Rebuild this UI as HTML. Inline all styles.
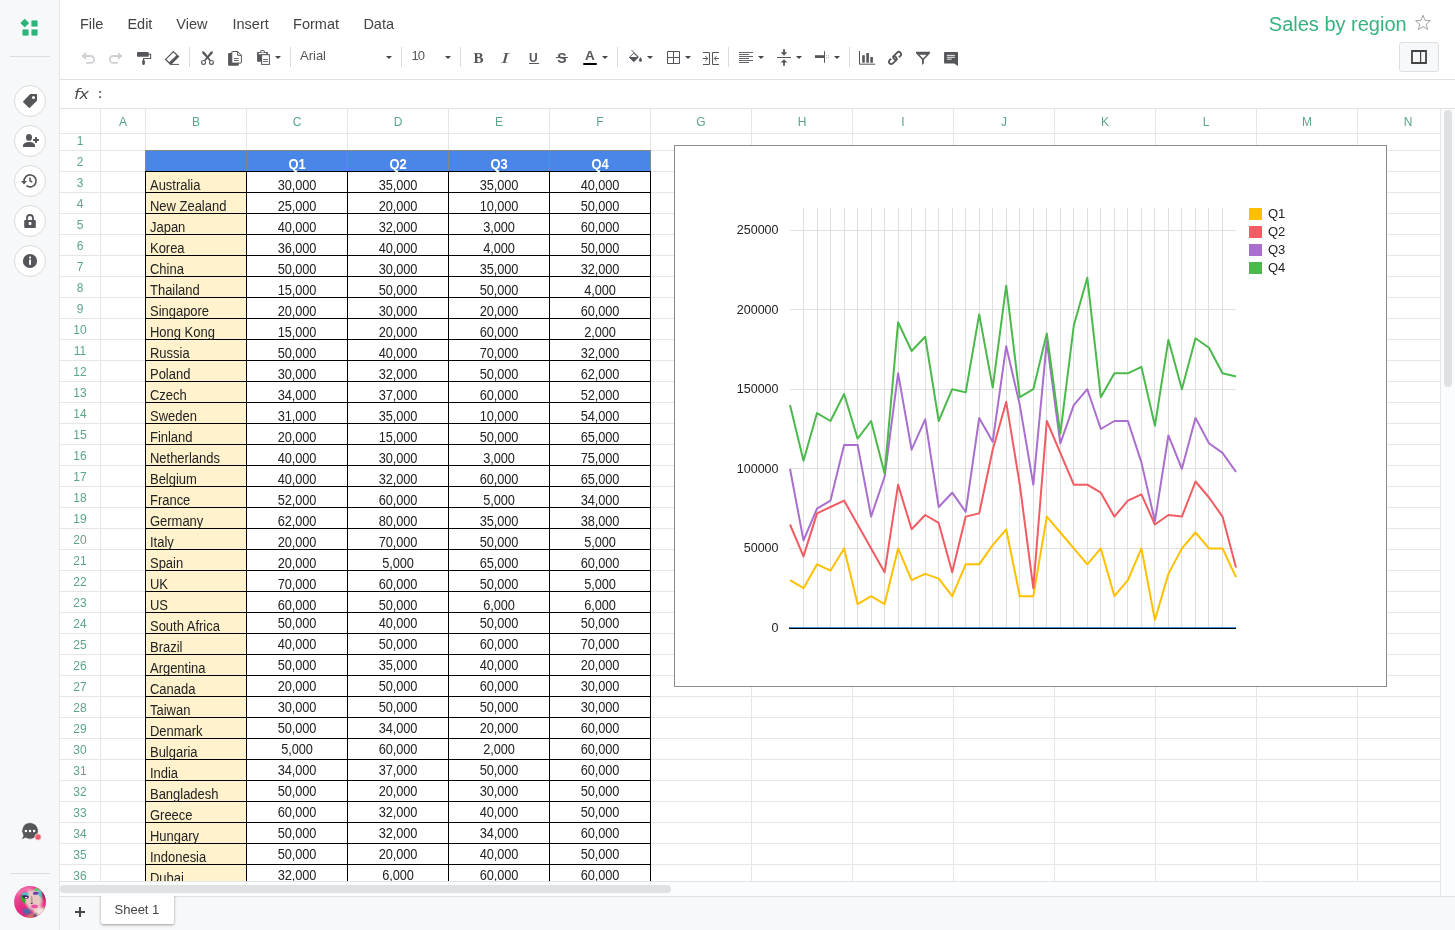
<!DOCTYPE html>
<html lang="en"><head><meta charset="utf-8"><title>Sales by region</title>
<style>
html,body{margin:0;padding:0;}
body{width:1455px;height:930px;overflow:hidden;background:#fff;position:relative;
 font-family:"Liberation Sans",Arial,sans-serif;font-size:13px;color:#222;}
.abs,.abs>*{position:absolute;}
div,svg,span{position:absolute;box-sizing:border-box;}
body>div{will-change:transform;}
#side{left:0;top:0;width:60px;height:930px;background:#f7f8fa;border-right:1px solid #e3e4e6;}
.circ{left:14px;width:32px;height:32px;border-radius:50%;background:#fff;border:1px solid #dcdcdc;}
.hr{left:10px;width:40px;height:1px;background:#dcdddf;}
.menu{top:14px;height:20px;line-height:20px;font-size:14.5px;color:#444;white-space:nowrap;}
.sep{width:1px;top:47px;height:20px;background:#dcdcdc;}
.dd{width:0;height:0;border-left:3.2px solid transparent;border-right:3.2px solid transparent;border-top:3.2px solid #444;top:56px;}
.t{white-space:nowrap;line-height:15px;height:15px;}
.ch{top:115px;width:40px;text-align:center;color:#5ba687;font-size:12px;line-height:15px;height:15px;}
.rh{left:60px;width:40px;text-align:center;color:#5ba687;font-size:12px;line-height:15px;height:15px;}
.vl{top:109px;width:1px;height:772px;background:#e6e6e6;}
.hl{left:60px;height:1px;width:1380px;background:#e6e6e6;}
.nm{left:150px;color:#222;font-size:13.33px;letter-spacing:-0.02px;transform:scale(0.975,1.07);transform-origin:0 12px;}
.nu{width:100px;text-align:center;color:#222;font-size:13.33px;letter-spacing:-0.12px;transform:scale(0.96,1.07);transform-origin:50% 12px;}
.q{width:100px;text-align:center;color:#fff;font-weight:bold;font-size:13.33px;letter-spacing:-0.2px;transform:scale(0.97,1.07);transform-origin:50% 12px;}
.bv{width:1px;background:#000;}
.bh{height:1px;background:#000;left:145px;width:506px;}
</style></head>
<body>
<div id="side">
<svg style="left:16px;top:14px" width="28" height="26" viewBox="16 14 28 26"><g fill="#2db37a" stroke="#fff" stroke-width="0.8"><rect x="21.3" y="19.6" width="6.9" height="6.9" rx="1.1" transform="rotate(45 24.75 23.05)"/><rect x="31" y="20" width="7" height="7" rx="1"/><rect x="22" y="29" width="7" height="7" rx="1"/><rect x="31" y="29" width="7" height="7" rx="1"/></g></svg><div class="hr" style="top:56px"></div>
<div class="circ" style="top:85px"></div><svg style="left:18px;top:88px" width="24" height="24" viewBox="18 88 24 24"><path d="M30.4 94.1 H36.4 Q37 94.1 37 94.7 V100.4 Q37 100.8 36.7 101.1 L29.9 107.8 Q29.4 108.2 28.9 107.7 L23.2 102.2 Q22.8 101.7 23.3 101.2 L29.7 94.4 Q30 94.1 30.4 94.1 Z" fill="#55565a"/><circle cx="33.5" cy="97.5" r="1.5" fill="#fff"/></svg>
<div class="circ" style="top:125px"></div><svg style="left:18px;top:128px" width="24" height="24" viewBox="18 128 24 24"><g fill="#55565a"><ellipse cx="29" cy="137.4" rx="3" ry="3.35"/><path d="M23 147 V145.6 C23 143.2 26 142 29 142 S35 143.2 35 145.6 V147 Z"/><rect x="33.1" y="139" width="5.8" height="2"/><rect x="35" y="137.1" width="2" height="5.8"/></g></svg>
<div class="circ" style="top:165px"></div><svg style="left:18px;top:168px" width="24" height="24" viewBox="18 168 24 24"><path d="M24.1 181.6 A6 6 0 1 1 26.4 185.7" fill="none" stroke="#55565a" stroke-width="1.7"/><path d="M21 181.1 H27 L24 184.6 Z" fill="#55565a"/><path d="M30 177.4 V180.7 L32.2 182" fill="none" stroke="#55565a" stroke-width="1.5"/></svg>
<div class="circ" style="top:205px"></div><svg style="left:18px;top:208px" width="24" height="24" viewBox="18 208 24 24"><rect x="24.2" y="220.1" width="11.6" height="7.8" rx="1" fill="#55565a"/><path d="M27 220.5 V218 A3 3 0 0 1 33 218 V220.5" fill="none" stroke="#55565a" stroke-width="1.8"/><rect x="28.8" y="222.1" width="2.5" height="2.9" rx="0.4" fill="#fff"/></svg>
<div class="circ" style="top:245px"></div><svg style="left:18px;top:248px" width="24" height="24" viewBox="18 248 24 24"><circle cx="30" cy="261" r="7.1" fill="#55565a"/><rect x="29.1" y="256.6" width="1.9" height="1.9" fill="#fff"/><rect x="29.1" y="259.6" width="1.9" height="5.2" fill="#fff"/></svg>
<svg style="left:16px;top:818px" width="30" height="28" viewBox="16 818 30 28"><path d="M30 822.6 A8.3 8.3 0 1 1 25.6 837.9 Q23.4 839.4 20.6 839.2 Q22.8 837.8 23.1 835.4 A8.3 8.3 0 0 1 30 822.6 Z" fill="#55565a" stroke="#fff" stroke-width="0.8"/><rect x="24.8" y="829.9" width="2.2" height="2.2" fill="#fff"/><rect x="28.9" y="829.9" width="2.2" height="2.2" fill="#fff"/><rect x="33" y="829.9" width="2.2" height="2.2" fill="#fff"/><circle cx="38" cy="837" r="3.2" fill="#f15b6c" stroke="#f9f1f3" stroke-width="0.7"/></svg><div class="hr" style="top:873px"></div>
<svg style="left:13px;top:885px" width="34" height="34" viewBox="13 885 34 34"><defs><clipPath id="avc"><circle cx="30" cy="902" r="15.9"/></clipPath><filter id="avb" x="-20%" y="-20%" width="140%" height="140%"><feGaussianBlur stdDeviation="0.8"/></filter><filter id="avb2" x="-20%" y="-20%" width="140%" height="140%"><feGaussianBlur stdDeviation="0.68"/></filter><linearGradient id="avg" x1="0" y1="0" x2="1" y2="1"><stop offset="0" stop-color="#f06aa6"/><stop offset="0.45" stop-color="#e62a82"/><stop offset="1" stop-color="#e02377"/></linearGradient></defs><g clip-path="url(#avc)"><rect x="13" y="885" width="34" height="34" fill="url(#avg)"/><g filter="url(#avb)"><path d="M17 893 Q24 886.5 34 886.5 L30 889.5 Q22 890 18 897 Z" fill="#f47fb2"/><path d="M41 890 L44.5 893 L45.5 902 L42 906 L41 899 Z" fill="#8a1f5c"/><path d="M42.5 898 Q46.5 901 45 908 L41.5 905.5 Z" fill="#ea3a8c"/><path d="M28.1 890.2 L40.3 889.5 L42 900.1 L40.3 908.9 L34.1 911.6 L28.7 908 L24.9 902.6 L25.3 896 Z" fill="#e9c8c2"/><path d="M34 911 L41 907.5 L44.5 908 L44.8 912 L38 916.5 L33 914.5 Z" fill="#f1e6e0"/><path d="M23 909 L29.6 908.6 L31 913 L27 914.8 L23.5 913 Z" fill="#3d6dab"/><path d="M26.5 916.8 L37 912.6 L37.6 914.4 L28 918.3 Z" fill="#c9b048"/><path d="M33.6 913.6 L36.8 913 L37 916.6 L33.8 917.2 Z" fill="#34206a"/></g><g filter="url(#avb2)"><path d="M21.8 893.2 Q25 891.8 28.6 893.4 L28.4 895.6 L22.4 895.8 Z" fill="#43c8c6"/><path d="M20.4 895.6 L23 895.4 L25.4 900.2 L24.8 903.8 L21.6 900.4 Z" fill="#22b026"/><path d="M22.6 895.6 Q25.6 894.6 28.8 896 L28.2 898.4 Q25 899 22.8 897.6 Z" fill="#3c1a6a"/><ellipse cx="26.1" cy="897.4" rx="1.2" ry="0.7" fill="#d8d8f0"/><path d="M34.4 888.4 L38.2 888.2 L38.4 890.8 L34.8 891.2 Z" fill="#3fd862"/><path d="M38.2 890.4 L41 891 L41.2 897.2 L39 896 Z" fill="#38c9d2"/><path d="M33 892.6 Q35.6 891 38.6 892.2 L38.2 894.6 Q35.4 895.2 33.2 894.4 Z" fill="#6b3caa"/><path d="M30.8 896 L32.2 896 L32.9 902.6 L32.6 904.2 L30.7 904 L31 900 Z" fill="#9a726e" opacity="0.55"/><ellipse cx="31.7" cy="903.4" rx="1.0" ry="0.7" fill="#4a2c2e" opacity="0.8"/><ellipse cx="34.5" cy="906.4" rx="3.4" ry="1.8" fill="#e955a4"/><circle cx="44" cy="908.8" r="0.9" fill="#86da42"/></g></g></svg></div>
<div id="top" style="left:60px;top:0;width:1395px;height:80px;border-bottom:1px solid #e0e1e3;background:#fff">
<div class="menu" style="left:20.0px">File</div><div class="menu" style="left:67.4px">Edit</div><div class="menu" style="left:116.3px">View</div><div class="menu" style="left:172.5px">Insert</div><div class="menu" style="left:233.1px">Format</div><div class="menu" style="left:303.4px">Data</div>
<div id="title" style="left:1208.8px;top:11px;height:26px;line-height:26px;font-size:20px;color:#36b37e;white-space:nowrap">Sales by region</div>
<svg style="left:1353px;top:12px" width="20" height="20" viewBox="1413 12 20 20"><path d="M1423 15.2 L1425 20.4 L1430.4 20.7 L1426.2 24.2 L1427.6 29.5 L1423 26.5 L1418.4 29.5 L1419.8 24.2 L1415.6 20.7 L1421 20.4 Z" fill="none" stroke="#9a9a9a" stroke-width="0.9" stroke-linejoin="miter"/></svg><div style="left:1339px;top:42px;width:40px;height:30px;border:1px solid #dedfe1;border-radius:3px;background:#f7f8fa"></div><svg style="left:1349px;top:48px" width="20" height="18" viewBox="1409 48 20 18"><path d="M1412 51 H1426 V63 H1412 Z" fill="none" stroke="#444" stroke-width="1.8"/><path d="M1420.6 51 V63" fill="none" stroke="#444" stroke-width="1.2"/></svg>
<svg style="left:18px;top:48px" width="20" height="20" viewBox="78 48 20 20"><path d="M85.9 56 H90.7 A3.45 3.45 0 0 1 90.7 62.9 H86.1" fill="none" stroke="#cfd0d3" stroke-width="1.8"/><path d="M81.3 56 L86 52.1 V59.9 Z" fill="#cfd0d3"/></svg>
<svg style="left:46px;top:48px" width="20" height="20" viewBox="106 48 20 20"><g transform="translate(204 0) scale(-1 1)"><path d="M85.9 56 H90.7 A3.45 3.45 0 0 1 90.7 62.9 H86.1" fill="none" stroke="#cfd0d3" stroke-width="1.8"/><path d="M81.3 56 L86 52.1 V59.9 Z" fill="#cfd0d3"/></g></svg>
<svg style="left:74px;top:48px" width="20" height="20" viewBox="134 48 20 20"><rect x="137" y="52" width="11.8" height="4.7" rx="0.9" fill="#55565a"/><path d="M148.8 54.3 H150.6 V58.5 H143.5 V60.2" fill="none" stroke="#55565a" stroke-width="1.1"/><rect x="142.2" y="60" width="2.7" height="4.9" rx="1.1" fill="#55565a"/></svg>
<svg style="left:102px;top:48px" width="20" height="20" viewBox="162 48 20 20"><path d="M173.4 51.6 L178.5 56.6 L170.6 64.3 L165.6 59.4 Z" fill="none" stroke="#55565a" stroke-width="1.3" stroke-linejoin="miter"/><path d="M178.5 56.6 L170.6 64.3 L168.9 62.6 L176.8 54.9 Z" fill="#55565a"/><path d="M170.4 64.4 H179" stroke="#55565a" stroke-width="1" fill="none"/></svg>
<svg style="left:138px;top:48px" width="20" height="20" viewBox="198 48 20 20"><g fill="none" stroke="#55565a" stroke-width="1.1"><circle cx="203.55" cy="62.4" r="1.95"/><circle cx="211.45" cy="62.4" r="1.95"/></g><path d="M202.20 50.90 L202.50 53.60 L209.60 61.10 L210.80 60.10 L204.60 51.90 Z" fill="#55565a"/><path d="M212.80 50.90 L212.50 53.60 L205.40 61.10 L204.20 60.10 L210.40 51.90 Z" fill="#55565a"/></svg>
<svg style="left:166px;top:48px" width="20" height="20" viewBox="226 48 20 20"><rect x="228.1" y="53.1" width="10.7" height="12.7" rx="0.8" fill="#55565a"/><path d="M232.3 51.5 H237.6 L241.4 55.3 V62.6 Q241.4 63.1 240.9 63.1 H232.3 Q231.8 63.1 231.8 62.6 V52 Q231.8 51.5 232.3 51.5 Z" fill="#fff" stroke="#55565a" stroke-width="1"/><path d="M237.6 51.5 V55.3 H241.4" fill="none" stroke="#55565a" stroke-width="1"/><path d="M234 58.5 H238.8 M234 60.5 H238.8" stroke="#55565a" stroke-width="0.9" fill="none"/></svg>
<svg style="left:194px;top:48px" width="20" height="20" viewBox="254 48 20 20"><rect x="257.1" y="52" width="10.8" height="9.7" rx="0.6" fill="#55565a"/><rect x="260.7" y="50.6" width="3.6" height="2.4" rx="0.5" fill="#fff" stroke="#55565a" stroke-width="1"/><rect x="258.7" y="52.9" width="7.6" height="1.3" rx="0.5" fill="#fff"/><rect x="261.6" y="54.7" width="7.8" height="9.7" fill="#fff" stroke="#55565a" stroke-width="1"/><path d="M263.1 59.5 H267.9 M263.1 61.5 H267.9" stroke="#55565a" stroke-width="0.9" fill="none"/></svg>
<div style="left:413.6px;top:48px;line-height:20px;height:20px;white-space:nowrap;color:#55565a;font-family:'Liberation Serif',serif;font-weight:bold;font-size:15px">B</div>
<div style="left:441.2px;top:48px;line-height:20px;height:20px;white-space:nowrap;color:#55565a;font-family:'Liberation Serif',serif;font-style:italic;font-size:15px;transform:scaleX(1.6);transform-origin:left">I</div>
<div style="left:469.1px;top:47.7px;line-height:20px;height:20px;white-space:nowrap;color:#55565a;font-size:12px;font-weight:bold">U</div><div style="left:469px;top:63px;width:10px;height:1px;background:#55565a"></div>
<div style="left:497.3px;top:48px;line-height:20px;height:20px;white-space:nowrap;color:#55565a;font-size:14px;font-weight:bold">S</div><div style="left:496px;top:57px;width:12px;height:1px;background:#55565a"></div>
<div style="left:525px;top:46px;line-height:20px;height:20px;white-space:nowrap;color:#55565a;font-size:13px;font-weight:bold;transform:scale(1.04,0.97);transform-origin:left bottom">A</div><div style="left:523px;top:63px;width:14px;height:2px;border-radius:1px;background:#000"></div>
<svg style="left:566px;top:48px" width="20" height="20" viewBox="626 48 20 20"><path d="M631.7 50.2 L638.4 57.1" stroke="#55565a" stroke-width="1" fill="none"/><path d="M633.8 53.2 L629.4 57.3 L633.8 61.5 L638.2 57.3 Z" fill="none" stroke="#55565a" stroke-width="1"/><path d="M629.2 57.1 H638.4 L633.8 61.9 Z" fill="#55565a"/><path d="M640.5 57 Q642 59.3 642 60.3 A1.5 1.5 0 0 1 639 60.3 Q639 59.3 640.5 57 Z" fill="#55565a"/></svg>
<svg style="left:604px;top:48px" width="20" height="20" viewBox="664 48 20 20"><path d="M667.5 51.5 H679.5 V63.5 H667.5 Z M673.5 51.5 V63.5 M667.5 57.5 H679.5" fill="none" stroke="#55565a" stroke-width="1"/></svg>
<svg style="left:640px;top:48px" width="22" height="20" viewBox="700 48 22 20"><path d="M703 52.5 H709.5 V64.5 H703 M719 52.5 H712.5 V64.5 H719" fill="none" stroke="#55565a" stroke-width="1"/><path d="M703 58.5 H707.6 M705.4 56.1 L707.8 58.5 L705.4 60.9 M719 58.5 H714.4 M716.6 56.1 L714.2 58.5 L716.6 60.9" fill="none" stroke="#55565a" stroke-width="1"/></svg>
<svg style="left:676px;top:48px" width="20" height="20" viewBox="736 48 20 20"><path d="M739 52.5 H753 M739 54.5 H749 M739 56.5 H753 M739 58.5 H749 M739 60.5 H753 M739 62.5 H749" fill="none" stroke="#55565a" stroke-width="0.9"/></svg>
<svg style="left:714px;top:47px" width="20" height="22" viewBox="774 47 20 22"><path d="M777 57.5 H791" stroke="#55565a" stroke-width="1" fill="none"/><path d="M783.1 49.2 H784.9 V52.3 H787.3 L784 55.7 L780.7 52.3 H783.1 Z M783.1 65.7 H784.9 V62.6 H787.3 L784 59.2 L780.7 62.6 H783.1 Z" fill="#55565a"/></svg>
<svg style="left:752px;top:48px" width="20" height="20" viewBox="812 48 20 20"><rect x="815" y="55.2" width="9.2" height="2.8" fill="#55565a"/><path d="M824.5 51.2 V62.8" stroke="#55565a" stroke-width="1" fill="none"/><g fill="#8a8b8e"><rect x="826.2" y="55.3" width="0.8" height="0.8"/><rect x="828" y="55.3" width="0.8" height="0.8"/><rect x="826.2" y="57.2" width="0.8" height="0.8"/><rect x="828" y="57.2" width="0.8" height="0.8"/></g></svg>
<svg style="left:796px;top:48px" width="22" height="20" viewBox="856 48 22 20"><path d="M859.5 51 V64.2 H875.2" fill="none" stroke="#55565a" stroke-width="1"/><g fill="#55565a"><rect x="862.2" y="55.2" width="2.6" height="7.5"/><rect x="866.3" y="53" width="2.6" height="9.7"/><rect x="870.3" y="57" width="2.6" height="5.7"/></g></svg>
<svg style="left:825px;top:48px" width="20" height="20" viewBox="885 48 20 20"><g fill="none" stroke="#55565a" stroke-width="1.8" transform="translate(895 57.95) rotate(-45)"><path d="M-1 -2.3 A2.3 2.3 0 0 1 -1 2.3 L-5.3 2.3 A2.3 2.3 0 0 1 -5.3 -2.3 L-3.2 -2.3"/><path d="M1 2.3 A2.3 2.3 0 0 1 1 -2.3 L5.3 -2.3 A2.3 2.3 0 0 1 5.3 2.3 L3.2 2.3"/></g></svg>
<svg style="left:853px;top:48px" width="20" height="20" viewBox="913 48 20 20"><path d="M916 51.8 H930 V53.2 L923.9 59.8 V63.6 L922.1 64.9 V59.8 L916 53.2 Z" fill="#55565a"/><path d="M919.4 54.7 H926.6 L923 58.5 Z" fill="#fff"/></svg>
<svg style="left:881px;top:48px" width="20" height="20" viewBox="941 48 20 20"><path d="M944.6 52 H957.5 Q958 52 958 52.5 V66 L954.2 63.5 H944.6 Q944.1 63.5 944.1 63 V52.5 Q944.1 52 944.6 52 Z" fill="#55565a"/><path d="M946.9 55.4 H954.9 M946.9 57.3 H954.9 M946.9 59.2 H951.7" stroke="#fff" stroke-width="0.9" fill="none"/></svg>
<div class="sep" style="left:129px"></div><div class="sep" style="left:230px"></div><div class="sep" style="left:341px"></div><div class="sep" style="left:400px"></div><div class="sep" style="left:557px"></div><div class="sep" style="left:668px"></div><div class="sep" style="left:789px"></div><div class="dd" style="left:214.8px"></div><div class="dd" style="left:325.8px"></div><div class="dd" style="left:384.8px"></div><div class="dd" style="left:541.7px"></div><div class="dd" style="left:586.9px"></div><div class="dd" style="left:624.8px"></div><div class="dd" style="left:697.8px"></div><div class="dd" style="left:735.7px"></div><div class="dd" style="left:773.8px"></div>
<div class="t" style="left:240px;top:48px;color:#555">Arial</div><div class="t" style="left:351.5px;top:48px;color:#555;letter-spacing:-0.9px">10</div>
</div>
<div id="fx" style="left:60px;top:80px;width:1395px;height:29px;border-bottom:1px solid #e0e1e3;background:#fff"><div style="left:13.5px;top:5px;font-style:italic;font-size:14px;line-height:18px;color:#48494c;font-family:'DejaVu Sans','Liberation Sans',sans-serif;letter-spacing:-0.4px;transform:scaleX(1.17);transform-origin:left">fx</div><div style="left:38px;top:4.5px;font-size:13px;font-weight:bold;line-height:18px;color:#55565a">:</div></div>
<div id="grid" style="left:0;top:0;width:1440px;height:881px;overflow:hidden">
<div class="vl" style="left:100px"></div><div class="vl" style="left:145px"></div><div class="vl" style="left:246px"></div><div class="vl" style="left:347px"></div><div class="vl" style="left:448px"></div><div class="vl" style="left:549px"></div><div class="vl" style="left:650px"></div><div class="vl" style="left:751px"></div><div class="vl" style="left:852px"></div><div class="vl" style="left:953px"></div><div class="vl" style="left:1054px"></div><div class="vl" style="left:1155px"></div><div class="vl" style="left:1256px"></div><div class="vl" style="left:1357px"></div><div class="vl" style="left:1458px"></div>
<div class="hl" style="top:133px"></div><div class="hl" style="top:150px"></div><div class="hl" style="top:171px"></div><div class="hl" style="top:192px"></div><div class="hl" style="top:213px"></div><div class="hl" style="top:234px"></div><div class="hl" style="top:255px"></div><div class="hl" style="top:276px"></div><div class="hl" style="top:297px"></div><div class="hl" style="top:318px"></div><div class="hl" style="top:339px"></div><div class="hl" style="top:360px"></div><div class="hl" style="top:381px"></div><div class="hl" style="top:402px"></div><div class="hl" style="top:423px"></div><div class="hl" style="top:444px"></div><div class="hl" style="top:465px"></div><div class="hl" style="top:486px"></div><div class="hl" style="top:507px"></div><div class="hl" style="top:528px"></div><div class="hl" style="top:549px"></div><div class="hl" style="top:570px"></div><div class="hl" style="top:591px"></div><div class="hl" style="top:612px"></div><div class="hl" style="top:633px"></div><div class="hl" style="top:654px"></div><div class="hl" style="top:675px"></div><div class="hl" style="top:696px"></div><div class="hl" style="top:717px"></div><div class="hl" style="top:738px"></div><div class="hl" style="top:759px"></div><div class="hl" style="top:780px"></div><div class="hl" style="top:801px"></div><div class="hl" style="top:822px"></div><div class="hl" style="top:843px"></div><div class="hl" style="top:864px"></div><div class="hl" style="top:885px"></div>
<div class="ch" style="left:103px">A</div><div class="ch" style="left:176px">B</div><div class="ch" style="left:277px">C</div><div class="ch" style="left:378px">D</div><div class="ch" style="left:479px">E</div><div class="ch" style="left:580px">F</div><div class="ch" style="left:681px">G</div><div class="ch" style="left:782px">H</div><div class="ch" style="left:883px">I</div><div class="ch" style="left:984px">J</div><div class="ch" style="left:1085px">K</div><div class="ch" style="left:1186px">L</div><div class="ch" style="left:1287px">M</div><div class="ch" style="left:1388px">N</div>
<div class="rh" style="top:134.0px">1</div><div class="rh" style="top:154.5px">2</div><div class="rh" style="top:175.5px">3</div><div class="rh" style="top:196.5px">4</div><div class="rh" style="top:217.5px">5</div><div class="rh" style="top:238.5px">6</div><div class="rh" style="top:259.5px">7</div><div class="rh" style="top:280.5px">8</div><div class="rh" style="top:301.5px">9</div><div class="rh" style="top:322.5px">10</div><div class="rh" style="top:343.5px">11</div><div class="rh" style="top:364.5px">12</div><div class="rh" style="top:385.5px">13</div><div class="rh" style="top:406.5px">14</div><div class="rh" style="top:427.5px">15</div><div class="rh" style="top:448.5px">16</div><div class="rh" style="top:469.5px">17</div><div class="rh" style="top:490.5px">18</div><div class="rh" style="top:511.5px">19</div><div class="rh" style="top:532.5px">20</div><div class="rh" style="top:553.5px">21</div><div class="rh" style="top:574.5px">22</div><div class="rh" style="top:595.5px">23</div><div class="rh" style="top:616.5px">24</div><div class="rh" style="top:637.5px">25</div><div class="rh" style="top:658.5px">26</div><div class="rh" style="top:679.5px">27</div><div class="rh" style="top:700.5px">28</div><div class="rh" style="top:721.5px">29</div><div class="rh" style="top:742.5px">30</div><div class="rh" style="top:763.5px">31</div><div class="rh" style="top:784.5px">32</div><div class="rh" style="top:805.5px">33</div><div class="rh" style="top:826.5px">34</div><div class="rh" style="top:847.5px">35</div><div class="rh" style="top:868.5px">36</div>
<div style="left:146px;top:151px;width:504px;height:20px;background:#4a86e8"></div><div style="left:146px;top:172px;width:100px;height:720px;background:#fff2cc"></div><div style="left:246px;top:172px;width:404px;height:720px;background:#fff"></div>
<div style="left:145px;top:150px;width:506px;height:1px;background:#868686"></div><div style="left:145px;top:150px;width:1px;height:21px;background:#868686"></div><div style="left:246px;top:150px;width:1px;height:21px;background:#868686"></div><div style="left:347px;top:150px;width:1px;height:21px;background:#868686"></div><div style="left:448px;top:150px;width:1px;height:21px;background:#868686"></div><div style="left:549px;top:150px;width:1px;height:21px;background:#868686"></div><div style="left:650px;top:150px;width:1px;height:21px;background:#868686"></div>
<div class="bv" style="left:145px;top:171px;height:720px"></div><div class="bv" style="left:246px;top:171px;height:720px"></div><div class="bv" style="left:347px;top:171px;height:720px"></div><div class="bv" style="left:448px;top:171px;height:720px"></div><div class="bv" style="left:549px;top:171px;height:720px"></div><div class="bv" style="left:650px;top:171px;height:720px"></div><div class="bh" style="top:171px"></div><div class="bh" style="top:192px"></div><div class="bh" style="top:213px"></div><div class="bh" style="top:234px"></div><div class="bh" style="top:255px"></div><div class="bh" style="top:276px"></div><div class="bh" style="top:297px"></div><div class="bh" style="top:318px"></div><div class="bh" style="top:339px"></div><div class="bh" style="top:360px"></div><div class="bh" style="top:381px"></div><div class="bh" style="top:402px"></div><div class="bh" style="top:423px"></div><div class="bh" style="top:444px"></div><div class="bh" style="top:465px"></div><div class="bh" style="top:486px"></div><div class="bh" style="top:507px"></div><div class="bh" style="top:528px"></div><div class="bh" style="top:549px"></div><div class="bh" style="top:570px"></div><div class="bh" style="top:591px"></div><div class="bh" style="top:612px"></div><div class="bh" style="top:633px"></div><div class="bh" style="top:654px"></div><div class="bh" style="top:675px"></div><div class="bh" style="top:696px"></div><div class="bh" style="top:717px"></div><div class="bh" style="top:738px"></div><div class="bh" style="top:759px"></div><div class="bh" style="top:780px"></div><div class="bh" style="top:801px"></div><div class="bh" style="top:822px"></div><div class="bh" style="top:843px"></div><div class="bh" style="top:864px"></div><div class="bh" style="top:885px"></div>
<div class="t q" style="left:247px;top:157px">Q1</div><div class="t q" style="left:348px;top:157px">Q2</div><div class="t q" style="left:449px;top:157px">Q3</div><div class="t q" style="left:550px;top:157px">Q4</div>
<div class="t nm" style="top:178px">Australia</div><div class="t nu" style="left:247.4px;top:178px">30,000</div><div class="t nu" style="left:348.4px;top:178px">35,000</div><div class="t nu" style="left:449.4px;top:178px">35,000</div><div class="t nu" style="left:550.4px;top:178px">40,000</div>
<div class="t nm" style="top:199px">New Zealand</div><div class="t nu" style="left:247.4px;top:199px">25,000</div><div class="t nu" style="left:348.4px;top:199px">20,000</div><div class="t nu" style="left:449.4px;top:199px">10,000</div><div class="t nu" style="left:550.4px;top:199px">50,000</div>
<div class="t nm" style="top:220px">Japan</div><div class="t nu" style="left:247.4px;top:220px">40,000</div><div class="t nu" style="left:348.4px;top:220px">32,000</div><div class="t nu" style="left:449.4px;top:220px">3,000</div><div class="t nu" style="left:550.4px;top:220px">60,000</div>
<div class="t nm" style="top:241px">Korea</div><div class="t nu" style="left:247.4px;top:241px">36,000</div><div class="t nu" style="left:348.4px;top:241px">40,000</div><div class="t nu" style="left:449.4px;top:241px">4,000</div><div class="t nu" style="left:550.4px;top:241px">50,000</div>
<div class="t nm" style="top:262px">China</div><div class="t nu" style="left:247.4px;top:262px">50,000</div><div class="t nu" style="left:348.4px;top:262px">30,000</div><div class="t nu" style="left:449.4px;top:262px">35,000</div><div class="t nu" style="left:550.4px;top:262px">32,000</div>
<div class="t nm" style="top:283px">Thailand</div><div class="t nu" style="left:247.4px;top:283px">15,000</div><div class="t nu" style="left:348.4px;top:283px">50,000</div><div class="t nu" style="left:449.4px;top:283px">50,000</div><div class="t nu" style="left:550.4px;top:283px">4,000</div>
<div class="t nm" style="top:304px">Singapore</div><div class="t nu" style="left:247.4px;top:304px">20,000</div><div class="t nu" style="left:348.4px;top:304px">30,000</div><div class="t nu" style="left:449.4px;top:304px">20,000</div><div class="t nu" style="left:550.4px;top:304px">60,000</div>
<div class="t nm" style="top:325px">Hong Kong</div><div class="t nu" style="left:247.4px;top:325px">15,000</div><div class="t nu" style="left:348.4px;top:325px">20,000</div><div class="t nu" style="left:449.4px;top:325px">60,000</div><div class="t nu" style="left:550.4px;top:325px">2,000</div>
<div class="t nm" style="top:346px">Russia</div><div class="t nu" style="left:247.4px;top:346px">50,000</div><div class="t nu" style="left:348.4px;top:346px">40,000</div><div class="t nu" style="left:449.4px;top:346px">70,000</div><div class="t nu" style="left:550.4px;top:346px">32,000</div>
<div class="t nm" style="top:367px">Poland</div><div class="t nu" style="left:247.4px;top:367px">30,000</div><div class="t nu" style="left:348.4px;top:367px">32,000</div><div class="t nu" style="left:449.4px;top:367px">50,000</div><div class="t nu" style="left:550.4px;top:367px">62,000</div>
<div class="t nm" style="top:388px">Czech</div><div class="t nu" style="left:247.4px;top:388px">34,000</div><div class="t nu" style="left:348.4px;top:388px">37,000</div><div class="t nu" style="left:449.4px;top:388px">60,000</div><div class="t nu" style="left:550.4px;top:388px">52,000</div>
<div class="t nm" style="top:409px">Sweden</div><div class="t nu" style="left:247.4px;top:409px">31,000</div><div class="t nu" style="left:348.4px;top:409px">35,000</div><div class="t nu" style="left:449.4px;top:409px">10,000</div><div class="t nu" style="left:550.4px;top:409px">54,000</div>
<div class="t nm" style="top:430px">Finland</div><div class="t nu" style="left:247.4px;top:430px">20,000</div><div class="t nu" style="left:348.4px;top:430px">15,000</div><div class="t nu" style="left:449.4px;top:430px">50,000</div><div class="t nu" style="left:550.4px;top:430px">65,000</div>
<div class="t nm" style="top:451px">Netherlands</div><div class="t nu" style="left:247.4px;top:451px">40,000</div><div class="t nu" style="left:348.4px;top:451px">30,000</div><div class="t nu" style="left:449.4px;top:451px">3,000</div><div class="t nu" style="left:550.4px;top:451px">75,000</div>
<div class="t nm" style="top:472px">Belgium</div><div class="t nu" style="left:247.4px;top:472px">40,000</div><div class="t nu" style="left:348.4px;top:472px">32,000</div><div class="t nu" style="left:449.4px;top:472px">60,000</div><div class="t nu" style="left:550.4px;top:472px">65,000</div>
<div class="t nm" style="top:493px">France</div><div class="t nu" style="left:247.4px;top:493px">52,000</div><div class="t nu" style="left:348.4px;top:493px">60,000</div><div class="t nu" style="left:449.4px;top:493px">5,000</div><div class="t nu" style="left:550.4px;top:493px">34,000</div>
<div class="t nm" style="top:514px">Germany</div><div class="t nu" style="left:247.4px;top:514px">62,000</div><div class="t nu" style="left:348.4px;top:514px">80,000</div><div class="t nu" style="left:449.4px;top:514px">35,000</div><div class="t nu" style="left:550.4px;top:514px">38,000</div>
<div class="t nm" style="top:535px">Italy</div><div class="t nu" style="left:247.4px;top:535px">20,000</div><div class="t nu" style="left:348.4px;top:535px">70,000</div><div class="t nu" style="left:449.4px;top:535px">50,000</div><div class="t nu" style="left:550.4px;top:535px">5,000</div>
<div class="t nm" style="top:556px">Spain</div><div class="t nu" style="left:247.4px;top:556px">20,000</div><div class="t nu" style="left:348.4px;top:556px">5,000</div><div class="t nu" style="left:449.4px;top:556px">65,000</div><div class="t nu" style="left:550.4px;top:556px">60,000</div>
<div class="t nm" style="top:577px">UK</div><div class="t nu" style="left:247.4px;top:577px">70,000</div><div class="t nu" style="left:348.4px;top:577px">60,000</div><div class="t nu" style="left:449.4px;top:577px">50,000</div><div class="t nu" style="left:550.4px;top:577px">5,000</div>
<div class="t nm" style="top:598px">US</div><div class="t nu" style="left:247.4px;top:598px">60,000</div><div class="t nu" style="left:348.4px;top:598px">50,000</div><div class="t nu" style="left:449.4px;top:598px">6,000</div><div class="t nu" style="left:550.4px;top:598px">6,000</div>
<div class="t nm" style="top:619px">South Africa</div><div class="t nu" style="left:247.4px;top:616px">50,000</div><div class="t nu" style="left:348.4px;top:616px">40,000</div><div class="t nu" style="left:449.4px;top:616px">50,000</div><div class="t nu" style="left:550.4px;top:616px">50,000</div>
<div class="t nm" style="top:640px">Brazil</div><div class="t nu" style="left:247.4px;top:637px">40,000</div><div class="t nu" style="left:348.4px;top:637px">50,000</div><div class="t nu" style="left:449.4px;top:637px">60,000</div><div class="t nu" style="left:550.4px;top:637px">70,000</div>
<div class="t nm" style="top:661px">Argentina</div><div class="t nu" style="left:247.4px;top:658px">50,000</div><div class="t nu" style="left:348.4px;top:658px">35,000</div><div class="t nu" style="left:449.4px;top:658px">40,000</div><div class="t nu" style="left:550.4px;top:658px">20,000</div>
<div class="t nm" style="top:682px">Canada</div><div class="t nu" style="left:247.4px;top:679px">20,000</div><div class="t nu" style="left:348.4px;top:679px">50,000</div><div class="t nu" style="left:449.4px;top:679px">60,000</div><div class="t nu" style="left:550.4px;top:679px">30,000</div>
<div class="t nm" style="top:703px">Taiwan</div><div class="t nu" style="left:247.4px;top:700px">30,000</div><div class="t nu" style="left:348.4px;top:700px">50,000</div><div class="t nu" style="left:449.4px;top:700px">50,000</div><div class="t nu" style="left:550.4px;top:700px">30,000</div>
<div class="t nm" style="top:724px">Denmark</div><div class="t nu" style="left:247.4px;top:721px">50,000</div><div class="t nu" style="left:348.4px;top:721px">34,000</div><div class="t nu" style="left:449.4px;top:721px">20,000</div><div class="t nu" style="left:550.4px;top:721px">60,000</div>
<div class="t nm" style="top:745px">Bulgaria</div><div class="t nu" style="left:247.4px;top:742px">5,000</div><div class="t nu" style="left:348.4px;top:742px">60,000</div><div class="t nu" style="left:449.4px;top:742px">2,000</div><div class="t nu" style="left:550.4px;top:742px">60,000</div>
<div class="t nm" style="top:766px">India</div><div class="t nu" style="left:247.4px;top:763px">34,000</div><div class="t nu" style="left:348.4px;top:763px">37,000</div><div class="t nu" style="left:449.4px;top:763px">50,000</div><div class="t nu" style="left:550.4px;top:763px">60,000</div>
<div class="t nm" style="top:787px">Bangladesh</div><div class="t nu" style="left:247.4px;top:784px">50,000</div><div class="t nu" style="left:348.4px;top:784px">20,000</div><div class="t nu" style="left:449.4px;top:784px">30,000</div><div class="t nu" style="left:550.4px;top:784px">50,000</div>
<div class="t nm" style="top:808px">Greece</div><div class="t nu" style="left:247.4px;top:805px">60,000</div><div class="t nu" style="left:348.4px;top:805px">32,000</div><div class="t nu" style="left:449.4px;top:805px">40,000</div><div class="t nu" style="left:550.4px;top:805px">50,000</div>
<div class="t nm" style="top:829px">Hungary</div><div class="t nu" style="left:247.4px;top:826px">50,000</div><div class="t nu" style="left:348.4px;top:826px">32,000</div><div class="t nu" style="left:449.4px;top:826px">34,000</div><div class="t nu" style="left:550.4px;top:826px">60,000</div>
<div class="t nm" style="top:850px">Indonesia</div><div class="t nu" style="left:247.4px;top:847px">50,000</div><div class="t nu" style="left:348.4px;top:847px">20,000</div><div class="t nu" style="left:449.4px;top:847px">40,000</div><div class="t nu" style="left:550.4px;top:847px">50,000</div>
<div class="t nm" style="top:871px">Dubai</div><div class="t nu" style="left:247.4px;top:868px">32,000</div><div class="t nu" style="left:348.4px;top:868px">6,000</div><div class="t nu" style="left:449.4px;top:868px">60,000</div><div class="t nu" style="left:550.4px;top:868px">60,000</div>
<div style="left:674px;top:145px;width:713px;height:542px;background:#fff;border:1px solid #8c8c8c"></div>
<svg style="left:674px;top:145px" width="713" height="542" viewBox="674 145 713 542">
<line x1="803.5" y1="208" x2="803.5" y2="628" stroke="#dfdfdf" stroke-width="1"/><line x1="817.5" y1="208" x2="817.5" y2="628" stroke="#dfdfdf" stroke-width="1"/><line x1="830.5" y1="208" x2="830.5" y2="628" stroke="#dfdfdf" stroke-width="1"/><line x1="844.5" y1="208" x2="844.5" y2="628" stroke="#dfdfdf" stroke-width="1"/><line x1="857.5" y1="208" x2="857.5" y2="628" stroke="#dfdfdf" stroke-width="1"/><line x1="871.5" y1="208" x2="871.5" y2="628" stroke="#dfdfdf" stroke-width="1"/><line x1="884.5" y1="208" x2="884.5" y2="628" stroke="#dfdfdf" stroke-width="1"/><line x1="898.5" y1="208" x2="898.5" y2="628" stroke="#dfdfdf" stroke-width="1"/><line x1="911.5" y1="208" x2="911.5" y2="628" stroke="#dfdfdf" stroke-width="1"/><line x1="925.5" y1="208" x2="925.5" y2="628" stroke="#dfdfdf" stroke-width="1"/><line x1="938.5" y1="208" x2="938.5" y2="628" stroke="#dfdfdf" stroke-width="1"/><line x1="952.5" y1="208" x2="952.5" y2="628" stroke="#dfdfdf" stroke-width="1"/><line x1="965.5" y1="208" x2="965.5" y2="628" stroke="#dfdfdf" stroke-width="1"/><line x1="979.5" y1="208" x2="979.5" y2="628" stroke="#dfdfdf" stroke-width="1"/><line x1="992.5" y1="208" x2="992.5" y2="628" stroke="#dfdfdf" stroke-width="1"/><line x1="1006.5" y1="208" x2="1006.5" y2="628" stroke="#dfdfdf" stroke-width="1"/><line x1="1019.5" y1="208" x2="1019.5" y2="628" stroke="#dfdfdf" stroke-width="1"/><line x1="1033.5" y1="208" x2="1033.5" y2="628" stroke="#dfdfdf" stroke-width="1"/><line x1="1046.5" y1="208" x2="1046.5" y2="628" stroke="#dfdfdf" stroke-width="1"/><line x1="1060.5" y1="208" x2="1060.5" y2="628" stroke="#dfdfdf" stroke-width="1"/><line x1="1073.5" y1="208" x2="1073.5" y2="628" stroke="#dfdfdf" stroke-width="1"/><line x1="1087.5" y1="208" x2="1087.5" y2="628" stroke="#dfdfdf" stroke-width="1"/><line x1="1100.5" y1="208" x2="1100.5" y2="628" stroke="#dfdfdf" stroke-width="1"/><line x1="1114.5" y1="208" x2="1114.5" y2="628" stroke="#dfdfdf" stroke-width="1"/><line x1="1127.5" y1="208" x2="1127.5" y2="628" stroke="#dfdfdf" stroke-width="1"/><line x1="1141.5" y1="208" x2="1141.5" y2="628" stroke="#dfdfdf" stroke-width="1"/><line x1="1154.5" y1="208" x2="1154.5" y2="628" stroke="#dfdfdf" stroke-width="1"/><line x1="1168.5" y1="208" x2="1168.5" y2="628" stroke="#dfdfdf" stroke-width="1"/><line x1="1181.5" y1="208" x2="1181.5" y2="628" stroke="#dfdfdf" stroke-width="1"/><line x1="1195.5" y1="208" x2="1195.5" y2="628" stroke="#dfdfdf" stroke-width="1"/><line x1="1208.5" y1="208" x2="1208.5" y2="628" stroke="#dfdfdf" stroke-width="1"/><line x1="1222.5" y1="208" x2="1222.5" y2="628" stroke="#dfdfdf" stroke-width="1"/>
<line x1="790" y1="548.5" x2="1236" y2="548.5" stroke="#e0e0e0" stroke-width="1"/><line x1="790" y1="468.5" x2="1236" y2="468.5" stroke="#e0e0e0" stroke-width="1"/><line x1="790" y1="389.5" x2="1236" y2="389.5" stroke="#e0e0e0" stroke-width="1"/><line x1="790" y1="309.5" x2="1236" y2="309.5" stroke="#e0e0e0" stroke-width="1"/><line x1="790" y1="230.5" x2="1236" y2="230.5" stroke="#e0e0e0" stroke-width="1"/>
<polyline points="790.0,580.2 803.5,588.2 817.0,564.3 830.5,570.7 844.1,548.4 857.6,604.1 871.1,596.2 884.6,604.1 898.1,548.4 911.6,580.2 925.2,573.9 938.7,578.6 952.2,596.2 965.7,564.3 979.2,564.3 992.7,545.2 1006.2,529.3 1019.8,596.2 1033.3,596.2 1046.8,516.6 1060.3,532.5 1073.8,548.4 1087.3,564.3 1100.8,548.4 1114.4,596.2 1127.9,580.2 1141.4,548.4 1154.9,620.0 1168.4,573.9 1181.9,548.4 1195.5,532.5 1209.0,548.4 1222.5,548.4 1236.0,577.1" fill="none" stroke="#ffc000" stroke-width="2" stroke-linejoin="round"/>
<polyline points="790.0,524.5 803.5,556.4 817.0,513.4 830.5,507.0 844.1,500.6 857.6,524.5 871.1,548.4 884.6,572.3 898.1,484.7 911.6,529.3 925.2,515.0 938.7,522.9 952.2,572.3 965.7,516.6 979.2,513.4 992.7,449.7 1006.2,401.9 1019.8,484.7 1033.3,588.2 1046.8,421.0 1060.3,452.9 1073.8,484.7 1087.3,484.7 1100.8,492.7 1114.4,516.6 1127.9,500.6 1141.4,494.3 1154.9,524.5 1168.4,515.0 1181.9,516.6 1195.5,481.5 1209.0,497.5 1222.5,516.6 1236.0,567.5" fill="none" stroke="#f15b63" stroke-width="2" stroke-linejoin="round"/>
<polyline points="790.0,468.8 803.5,540.4 817.0,508.6 830.5,500.6 844.1,444.9 857.6,444.9 871.1,516.6 884.6,476.8 898.1,373.3 911.6,449.7 925.2,419.4 938.7,507.0 952.2,492.7 965.7,511.8 979.2,417.9 992.7,441.7 1006.2,346.2 1019.8,405.1 1033.3,484.7 1046.8,341.4 1060.3,443.3 1073.8,405.1 1087.3,389.2 1100.8,429.0 1114.4,421.0 1127.9,421.0 1141.4,462.4 1154.9,521.3 1168.4,435.4 1181.9,468.8 1195.5,417.9 1209.0,443.3 1222.5,452.9 1236.0,472.0" fill="none" stroke="#aa6fce" stroke-width="2" stroke-linejoin="round"/>
<polyline points="790.0,405.1 803.5,460.8 817.0,413.1 830.5,421.0 844.1,394.0 857.6,438.6 871.1,421.0 884.6,473.6 898.1,322.3 911.6,351.0 925.2,336.7 938.7,421.0 952.2,389.2 965.7,392.4 979.2,314.4 992.7,387.6 1006.2,285.7 1019.8,397.2 1033.3,389.2 1046.8,333.5 1060.3,433.8 1073.8,325.5 1087.3,277.8 1100.8,397.2 1114.4,373.3 1127.9,373.3 1141.4,366.9 1154.9,425.8 1168.4,339.8 1181.9,389.2 1195.5,338.3 1209.0,347.8 1222.5,373.3 1236.0,376.5" fill="none" stroke="#4bb94b" stroke-width="2" stroke-linejoin="round"/>
<line x1="789" y1="627.5" x2="1236" y2="627.5" stroke="#3d8fe0" stroke-width="1"/><line x1="789" y1="628.5" x2="1236" y2="628.5" stroke="#000" stroke-width="1"/>
<text x="778.5" y="632.0" text-anchor="end" font-size="12.5" fill="#222" font-family="Liberation Sans, Arial, sans-serif">0</text><text x="778.5" y="552.0" text-anchor="end" font-size="12.5" fill="#222" font-family="Liberation Sans, Arial, sans-serif">50000</text><text x="778.5" y="473.0" text-anchor="end" font-size="12.5" fill="#222" font-family="Liberation Sans, Arial, sans-serif">100000</text><text x="778.5" y="393.0" text-anchor="end" font-size="12.5" fill="#222" font-family="Liberation Sans, Arial, sans-serif">150000</text><text x="778.5" y="314.0" text-anchor="end" font-size="12.5" fill="#222" font-family="Liberation Sans, Arial, sans-serif">200000</text><text x="778.5" y="234.0" text-anchor="end" font-size="12.5" fill="#222" font-family="Liberation Sans, Arial, sans-serif">250000</text>
<rect x="1249" y="208" width="13" height="12" fill="#ffc000"/><text x="1268" y="218" font-size="13" fill="#222" font-family="Liberation Sans, Arial, sans-serif">Q1</text><rect x="1249" y="226" width="13" height="12" fill="#f15b63"/><text x="1268" y="236" font-size="13" fill="#222" font-family="Liberation Sans, Arial, sans-serif">Q2</text><rect x="1249" y="244" width="13" height="12" fill="#aa6fce"/><text x="1268" y="254" font-size="13" fill="#222" font-family="Liberation Sans, Arial, sans-serif">Q3</text><rect x="1249" y="262" width="13" height="12" fill="#4bb94b"/><text x="1268" y="272" font-size="13" fill="#222" font-family="Liberation Sans, Arial, sans-serif">Q4</text>
</svg>
</div>
<div style="left:1440px;top:109px;width:15px;height:787px;background:#fbfcfd;border-left:1px solid #e5e6e8"></div><div style="left:1444px;top:110px;width:8px;height:277px;border-radius:4px;background:#e0e1e3"></div>
<div style="left:60px;top:881px;width:1380px;height:15px;background:#fbfcfd;border-top:1px solid #e2e3e5"></div><div style="left:60px;top:885px;width:611px;height:8px;border-radius:4px;background:#e0e1e3"></div>
<div id="bot" style="left:60px;top:896px;width:1395px;height:34px;background:#f7f8fa;border-top:1px solid #e0e1e3"><div style="left:15px;top:14px;width:10px;height:2px;background:#484848"></div><div style="left:19px;top:10px;width:2px;height:10px;background:#484848"></div><div style="left:31px;top:-1px;width:100px;height:35px;overflow:hidden"><div style="left:10px;top:-4px;width:73px;height:32px;background:#fff;border-radius:0 0 2px 2px;box-shadow:0 1px 3px rgba(0,0,0,0.38)"></div></div><div class="t" style="left:54.5px;top:5px;color:#444">Sheet 1</div></div>
</body></html>
